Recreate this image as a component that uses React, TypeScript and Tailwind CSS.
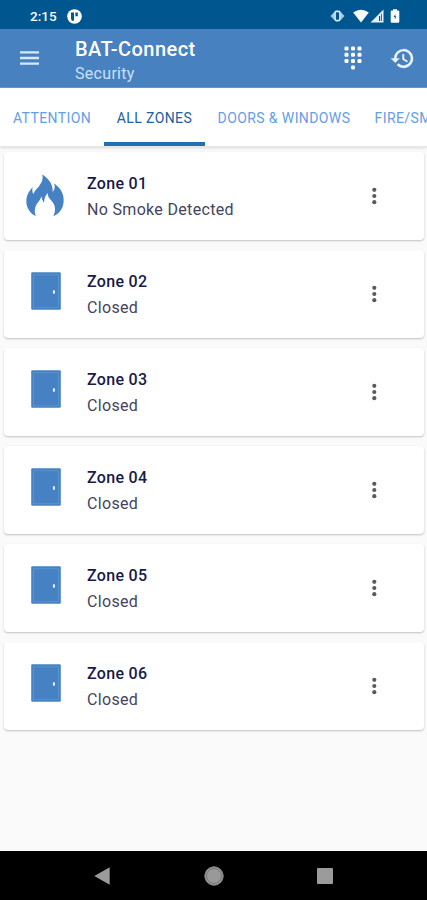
import React from "react";

const tabs = [
  { label: "ATTENTION", active: false, cls: "w-[104px]" },
  { label: "ALL ZONES", active: true, cls: "w-[101px]" },
  { label: "DOORS & WINDOWS", active: false, cls: "w-[158px]" },
  { label: "FIRE/SMOKE", active: false, cls: "w-[108px]" },
];

const zones = [
  { name: "Zone 01", status: "No Smoke Detected", icon: "fire" },
  { name: "Zone 02", status: "Closed", icon: "door" },
  { name: "Zone 03", status: "Closed", icon: "door" },
  { name: "Zone 04", status: "Closed", icon: "door" },
  { name: "Zone 05", status: "Closed", icon: "door" },
  { name: "Zone 06", status: "Closed", icon: "door" },
];

function Flame() {
  return (
    <svg width="38" height="43" viewBox="0 0 114 129" className="mr-px mt-[22px]">
      <path
        fill="#4682c3"
        d="M49 1C67 14 82 30 80 54C86 47 89 37 83 28C101 40 113 56 113 78C113 101 103 117 82 127C91 108 88 93 77 81C69 73 65 67 65 57C58 64 55 73 54 86C50 81 47 75 46 66C43 80 37 82 32 91C25 103 25 117 30 127C12 119 1 101 1 82C1 65 8 53 20 39C18 47 19 54 22 60C27 48 33 45 39 37C47 25 52 18 49 1Z"
      />
    </svg>
  );
}

function Door() {
  return (
    <svg width="30" height="38" viewBox="0 0 30 38" className="mt-[22px]">
      <rect x="0.2" y="0.2" width="29.6" height="37.6" rx="1.2" fill="#4682c3" />
      <rect x="2.5" y="2.8" width="25" height="33" fill="none" stroke="#659bd4" strokeWidth="0.6" />
      <ellipse cx="22.9" cy="20" rx="1.1" ry="2" fill="#edf6ff" />
    </svg>
  );
}

function StatusBar() {
  return (
    <div className="flex h-[29px] shrink-0 items-center bg-[#00568f] pl-[30px] pr-[27px] pt-[3px] text-white">
      <span className="w-[37px] text-[13.5px] font-medium leading-4">2:15</span>
      <svg width="15" height="15" viewBox="0 0 15 15">
        <circle cx="7.5" cy="7.5" r="7.3" fill="#fff" />
        <path d="M4 3.5H7V11.8H5Q4 10.5 4 9ZM8.4 3.6H10.8V7.2H8.4Z" fill="#00568f" />
      </svg>
      <div className="ml-auto flex items-center">
        <svg width="15" height="14" viewBox="0 0 15 14">
          <path d="M4.2 3L0.5 7L4.2 11M10.8 3L14.5 7L10.8 11" fill="#a8c8e5" />
          <rect x="5" y="2.4" width="5" height="9.2" rx="1.5" fill="#00568f" stroke="#e0efff" strokeWidth="1.7" />
        </svg>
        <svg width="16" height="14" viewBox="0 0 16 14" className="ml-[8px]">
          <path d="M0.2 3.4Q8-2 15.8 3.4L8 13.5Z" fill="#fff" />
        </svg>
        <svg width="14" height="14" viewBox="0 0 14 14" className="ml-[1px]">
          <path d="M13.5 0.5V13.5H0.5Z" fill="#e5f1fc" />
          <path d="M9 7H10.2V12H9ZM11.2 4.8H12V12H11.2Z" fill="#00568f" />
        </svg>
        <svg width="10" height="14" viewBox="0 0 10 14" className="ml-[6px]">
          <path d="M3 .2H7V1.5H8.3Q9.3 1.5 9.3 2.6V12.6Q9.3 13.8 8.2 13.8H1.8Q.7 13.8.7 12.6V2.6Q.7 1.5 1.7 1.5H3Z" fill="#fff" />
          <path d="M5.3 5L3.6 8H4.8V10.5L6.4 7.4H5.3Z" fill="#00568f" />
        </svg>
      </div>
    </div>
  );
}

function AppBar() {
  return (
    <header className="flex h-[59px] shrink-0 border-b border-[#6c98c8] bg-[#4881c0] pl-5 pr-3 text-white">
      <svg width="19" height="14" viewBox="0 0 19 14" className="mt-[22px]">
        <path d="M0 1.4H19M0 7H19M0 12.6H19" stroke="#d5e8fc" strokeWidth="2.4" />
      </svg>
      <div className="ml-9 pt-[8px]">
        <h1 className="text-[20px] font-medium leading-[24px] tracking-[0.45px]">BAT-Connect</h1>
        <p className="pt-px text-[16px] leading-[24px] tracking-[0.3px] text-[#c8e0fb]">Security</p>
      </div>
      <svg width="18" height="24" viewBox="0 0 18 24" className="ml-auto mt-[17px]" fill="#fff">
        {[2.5, 8.8, 15.1].map((y) =>
          [2.5, 9, 15.5].map((x) => <rect key={`${x}-${y}`} x={x - 2} y={y - 2} width="4" height="4" rx="1.3" />)
        )}
        <rect x="7" y="19.4" width="4" height="4" rx="1.3" />
      </svg>
      <svg width="25" height="25" viewBox="0 0 24 24" className="ml-[28px] mt-[17px]" fill="#eef6ff" stroke="#eef6ff" strokeWidth="0.35">
        <path d="M13 3a9 9 0 0 0-9 9H1l3.9 3.9.1.1L9 12H6a7 7 0 1 1 2.1 4.9l-1.4 1.4A9 9 0 1 0 13 3zm-1 5v5l4.3 2.5.7-1.2-3.5-2.1V8H12z" />
      </svg>
    </header>
  );
}

export default function App() {
  return (
    <div className="flex h-[900px] w-[427px] flex-col overflow-hidden bg-[#fafafa] font-['Roboto',sans-serif]">
      <StatusBar />
      <AppBar />
      <nav className="flex h-[59px] shrink-0 overflow-hidden border-b border-[#e6e6e6] bg-white shadow-[0_1px_3px_rgba(0,0,0,0.12)]">
        {tabs.map((tab) => (
          <div
            key={tab.label}
            className={`flex h-[58px] shrink-0 items-center justify-center whitespace-nowrap text-[14px] leading-4 tracking-[0.4px] ${tab.cls} ${
              tab.active
                ? "border-b-[4px] border-[#2170b4] pt-[6px] text-[#21609f]"
                : "pt-[2px] text-[#649ee6]"
            }`}
          >
            {tab.label}
          </div>
        ))}
      </nav>
      <main className="flex flex-1 flex-col gap-[10px] pl-1 pr-[3px] pt-[5px]">
        {zones.map((zone) => (
          <section key={zone.name} className="flex h-[88px] shrink-0 rounded-[4px] bg-white shadow-[0_1px_2px_rgba(0,0,0,0.23)]">
            <div className="flex w-[83px] justify-center">{zone.icon === "fire" ? <Flame /> : <Door />}</div>
            <div className="w-[278px] pt-[19px] tracking-[0.32px]">
              <h2 className="text-[16px] font-medium leading-[26px] text-[#171a49]">{zone.name}</h2>
              <p className="text-[16px] leading-[26px] text-[#444460]">{zone.status}</p>
            </div>
            <svg width="20" height="20" viewBox="0 0 20 20" className="mt-[34px]" fill="#5b5b5b">
              <circle cx="9.3" cy="3.8" r="2.1" />
              <circle cx="9.3" cy="10" r="2.1" />
              <circle cx="9.3" cy="16.2" r="2.1" />
            </svg>
          </section>
        ))}
      </main>
      <footer className="flex h-[49px] shrink-0 items-center bg-black pl-[94px]">
        <svg width="16" height="18" viewBox="0 0 16 18">
          <path d="M0.3 9L15.7 0.3V17.7Z" fill="#9b9b9b" />
        </svg>
        <svg width="20" height="20" viewBox="0 0 20 20" className="ml-[94px]">
          <circle cx="10" cy="10" r="9.2" fill="#999" stroke="#8a8a8a" />
          <circle cx="10" cy="10" r="7.5" fill="none" stroke="#686868" strokeWidth="0.7" />
        </svg>
        <div className="ml-[93px] size-4 rounded-[1px] bg-[#9b9b9b]" />
      </footer>
    </div>
  );
}
